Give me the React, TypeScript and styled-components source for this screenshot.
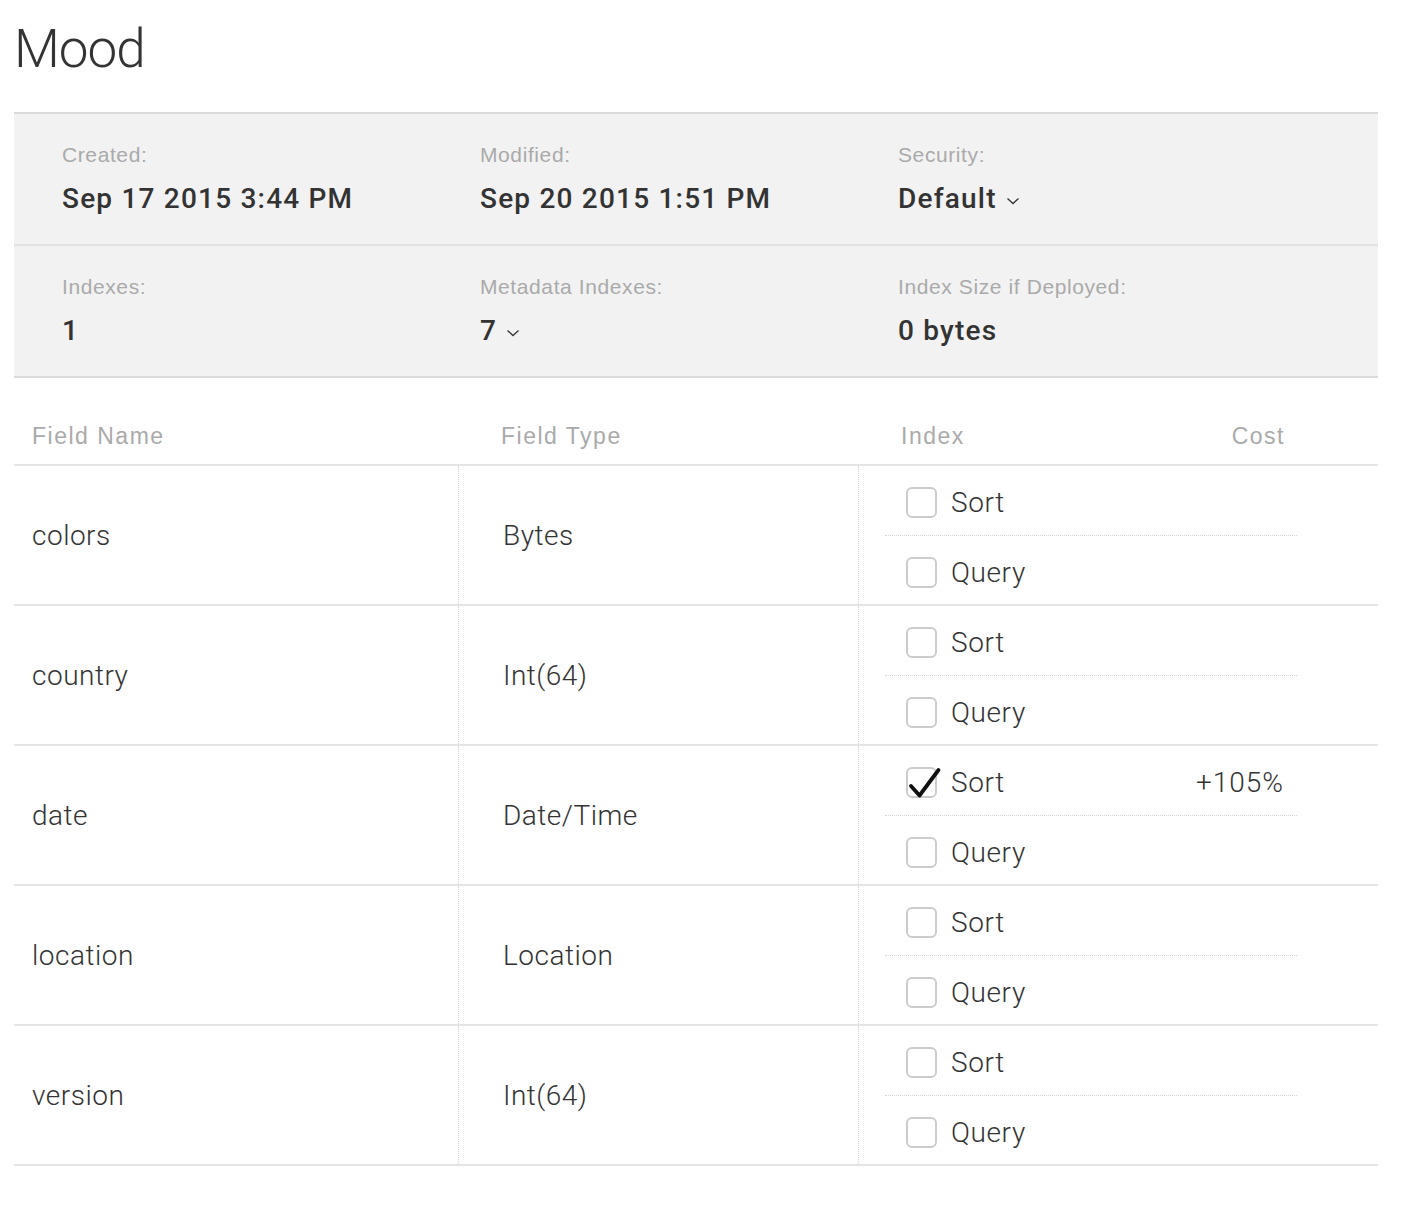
import React from "react";
import styled, { createGlobalStyle } from "styled-components";

const GlobalStyle = createGlobalStyle`
  * {
    box-sizing: border-box;
  }
  body {
    margin: 0;
    background: #ffffff;
    font-family: Roboto, "Liberation Sans", sans-serif;
    color: #333333;
  }
`;

interface Field {
  name: string;
  type: string;
  sort: boolean;
  query: boolean;
  cost?: string;
}

const fields: Field[] = [
  { name: "colors", type: "Bytes", sort: false, query: false },
  { name: "country", type: "Int(64)", sort: false, query: false },
  { name: "date", type: "Date/Time", sort: true, query: false, cost: "+105%" },
  { name: "location", type: "Location", sort: false, query: false },
  { name: "version", type: "Int(64)", sort: false, query: false },
];

function Chevron() {
  return (
    <ChevronIcon width="14" height="8" viewBox="0 0 14 8">
      <polyline
        points="1.5,1.5 7,6.5 12.5,1.5"
        fill="none"
        stroke="#333"
        strokeWidth="1.3"
      />
    </ChevronIcon>
  );
}

function CheckBox({ checked }: { checked: boolean }) {
  return (
    <Box>
      {checked && (
        <CheckMark width="36" height="34" viewBox="0 0 36 34">
          <polyline
            points="5,19 13.5,28.5 32.5,3"
            fill="none"
            stroke="#111"
            strokeWidth="3.8"
            strokeLinecap="round"
            strokeLinejoin="round"
          />
        </CheckMark>
      )}
    </Box>
  );
}

function InfoItem({
  label,
  value,
  dropdown,
}: {
  label: string;
  value: string;
  dropdown?: boolean;
}) {
  return (
    <Info>
      <InfoLabel>{label}</InfoLabel>
      <InfoValue>
        {value}
        {dropdown && <Chevron />}
      </InfoValue>
    </Info>
  );
}

export default function App() {
  return (
    <Page>
      <GlobalStyle />
      <Title>Mood</Title>

      {/* SUMMARY PANEL */}
      <Panel>
        <PanelRow>
          <InfoItem label="Created:" value="Sep 17 2015 3:44 PM" />
          <InfoItem label="Modified:" value="Sep 20 2015 1:51 PM" />
          <InfoItem label="Security:" value="Default" dropdown />
        </PanelRow>
        <PanelRow>
          <InfoItem label="Indexes:" value="1" />
          <InfoItem label="Metadata Indexes:" value="7" dropdown />
          <InfoItem label="Index Size if Deployed:" value="0 bytes" />
        </PanelRow>
      </Panel>

      {/* FIELDS TABLE */}
      <HeaderRow>
        <HeadCell>Field Name</HeadCell>
        <HeadCell $indent={42}>Field Type</HeadCell>
        <IndexHead $indent={42}>
          <span>Index</span>
          <span>Cost</span>
        </IndexHead>
      </HeaderRow>

      {fields.map((f) => (
        <Row key={f.name}>
          <Cell>{f.name}</Cell>
          <Cell $divider $indent={44}>
            {f.type}
          </Cell>
          <IndexCell>
            <Option>
              <CheckBox checked={f.sort} />
              <OptionLabel>Sort</OptionLabel>
              {f.cost && <Cost>{f.cost}</Cost>}
            </Option>
            <Option $last>
              <CheckBox checked={f.query} />
              <OptionLabel>Query</OptionLabel>
            </Option>
          </IndexCell>
        </Row>
      ))}
    </Page>
  );
}

const Page = styled.div`
  padding: 0 26px 40px 14px;
  width: 1404px;
`;

const Title = styled.h1`
  margin: 0;
  padding-top: 23px;
  height: 112px;
  font-size: 53px;
  line-height: 53px;
  font-weight: 300;
  letter-spacing: -1px;
  color: #333;
`;

const Panel = styled.div`
  background: #f2f2f2;
  border-top: 2px solid #dadada;
  border-bottom: 2px solid #dadada;
`;

const PanelRow = styled.div`
  display: grid;
  grid-template-columns: 418px 418px 1fr;
  padding: 30px 0 0 48px;
  height: 130px;

  & + & {
    border-top: 2px solid #e3e3e3;
    height: 132px;
  }
`;

const Info = styled.div`
  display: flex;
  flex-direction: column;
`;

const InfoLabel = styled.div`
  font-family: "Liberation Sans", Arial, sans-serif;
  font-size: 21px;
  line-height: 22px;
  letter-spacing: 0.6px;
  color: #aaaaaa;
`;

const InfoValue = styled.div`
  margin-top: 16px;
  font-size: 28px;
  line-height: 34px;
  font-weight: 500;
  letter-spacing: 1.2px;
  color: #333;
  display: flex;
  align-items: center;
`;

const ChevronIcon = styled.svg`
  margin-left: 9px;
  margin-top: 4px;
`;

const HeaderRow = styled.div`
  display: grid;
  grid-template-columns: 445px 400px 1fr;
  padding-top: 44px;
  height: 88px;
  border-bottom: 2px solid #e5e5e5;
`;

const HeadCell = styled.div<{ $indent?: number }>`
  padding-left: ${(p) => p.$indent ?? 18}px;
  font-family: "Liberation Sans", Arial, sans-serif;
  font-size: 23px;
  line-height: 28px;
  letter-spacing: 1.5px;
  color: #aaaaaa;
`;

const IndexHead = styled(HeadCell)`
  display: flex;
  justify-content: space-between;
  width: 438px;
  padding-right: 12px;
`;

const Row = styled.div`
  display: grid;
  grid-template-columns: 445px 400px 1fr;
  height: 140px;
  border-bottom: 2px solid #e5e5e5;
`;

const Cell = styled.div<{ $divider?: boolean; $indent?: number }>`
  display: flex;
  align-items: center;
  padding-left: ${(p) => p.$indent ?? 18}px;
  font-size: 28px;
  font-weight: 300;
  letter-spacing: 0.5px;
  color: #333;
  border-left: ${(p) => (p.$divider ? "1px dotted #d6d6d6" : "none")};
  margin-left: ${(p) => (p.$divider ? "-1px" : "0")};
`;

const IndexCell = styled.div`
  display: flex;
  flex-direction: column;
  border-left: 1px dotted #d6d6d6;
  padding-left: 26px;
  margin-left: -1px;
`;

const Option = styled.div<{ $last?: boolean }>`
  display: flex;
  align-items: center;
  width: 412px;
  height: ${(p) => (p.$last ? 68 : 70)}px;
  padding: 4px 13px 0 21px;
  border-bottom: ${(p) => (p.$last ? "none" : "1px dotted #d6d6d6")};
`;

const Box = styled.div`
  position: relative;
  width: 31px;
  height: 31px;
  border: 2px solid #cccccc;
  border-radius: 6px;
  background: #fff;
  flex-shrink: 0;
`;

const CheckMark = styled.svg`
  position: absolute;
  left: -2px;
  top: -2px;
  overflow: visible;
`;

const OptionLabel = styled.span`
  margin-left: 14px;
  font-size: 28px;
  font-weight: 300;
  letter-spacing: 0.6px;
  color: #333;
`;

const Cost = styled.span`
  margin-left: auto;
  font-size: 28px;
  font-weight: 300;
  letter-spacing: 1px;
  color: #333;
`;
